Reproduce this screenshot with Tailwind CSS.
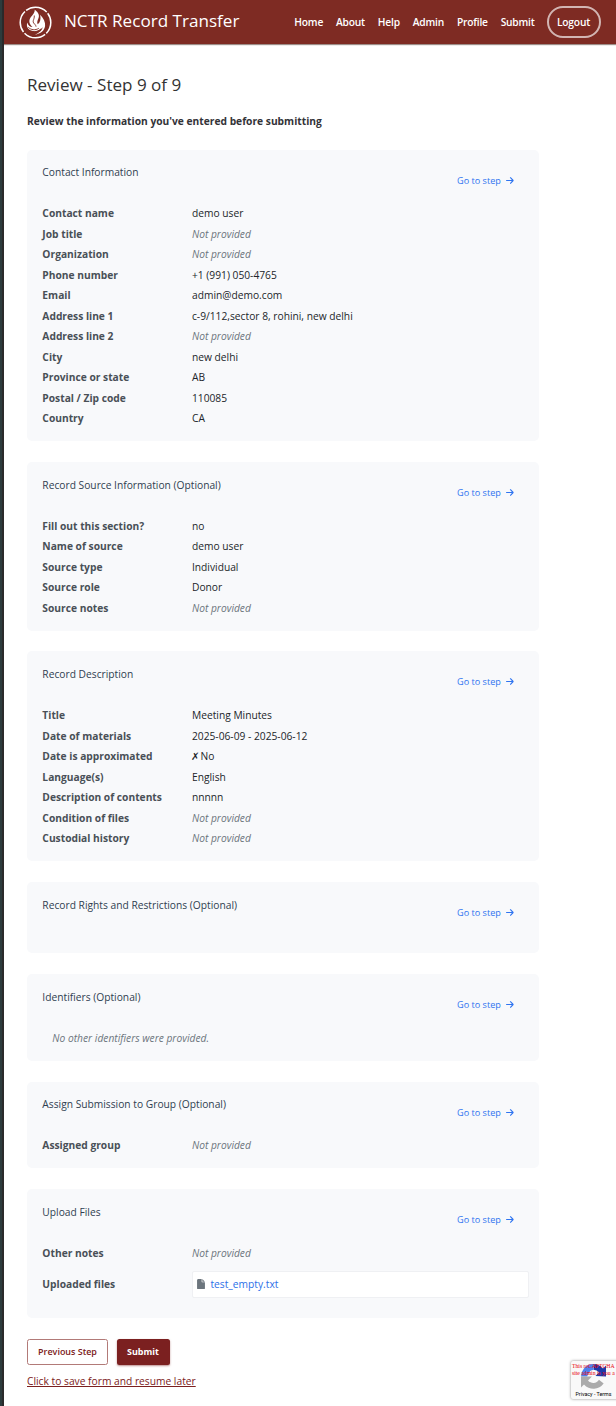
<!DOCTYPE html>
<html lang="en">
<head>
<meta charset="utf-8">
<title>NCTR Record Transfer</title>
<script src="https://cdn.jsdelivr.net/npm/@tailwindcss/browser@4"></script>
</head>
<body class="bg-white font-['Open_Sans','DejaVu_Sans',sans-serif] text-[10.24px] text-[#212529] overflow-hidden">
<svg class="hidden">
  <symbol id="arrow" viewBox="0 0 448 512"><path fill="currentColor" d="M438.600 278.600c12.500-12.500 12.500-32.800 0-45.300l-160-160c-12.500-12.500-32.800-12.500-45.300 0s-12.500 32.800 0 45.300L338.800 224 32 224c-17.700 0-32 14.300-32 32s14.300 32 32 32l306.700 0L233.400 393.400c-12.500 12.500-12.500 32.800 0 45.300s32.800 12.500 45.300 0l160-160z"/></symbol>
</svg>
<div class="flex h-[1406px] relative overflow-hidden">
 <div class="w-[4px] shrink-0 bg-[#2a2a2b] border-l-2 border-[#2c3b3c]"></div>
 <div class="grow">
  <header class="h-[44px] bg-[#7e2b23] text-white flex items-center pl-[15px] pr-[15.500px] shadow-[0_1px_1px_rgba(60,30,20,0.5)]">
    <svg class="size-[33px] shrink-0" viewBox="0 0 33 33" fill="none">
      <circle cx="16.500" cy="16.500" r="15.300" stroke="#fff" stroke-width="1.500" stroke-dasharray="22.500 1.530" stroke-dashoffset="10.500"/>
      <path fill="#fff" d="M15.800 3.800c4.200 3 4.900 6 3.400 9.300-.8 1.800-1.400 3.500-.5 5.200 2.500-1.700 3.300-5 2.500-9.500 3.300 3.500 5.400 7.400 4.900 11.300-.5 4.500-4.400 7.600-10.200 8.900 4.300-2.300 7.300-4.500 7.700-7.700-2.700 3.700-6 4.400-9.600 3.700-4.900-1-7-4.600-5.700-8.600.6 2.700 2.500 4.400 5.200 4.500-3.700-3.200-4-6.300-1.600-9.900 2.200-2.400 3.900-4.100 3.900-7.200z"/>
      <path d="M15.300 9.500c.3 4.500-2.800 5.500.2 8.500 1 1 1.500 1.800 1.500 2.700M9.300 21.300c2.600 2.700 7 3.300 10.500 1M13 25.500c3.500.6 6.500-.5 9-2.500" stroke="#7e2b23" stroke-width=".9"/>
    </svg>
    <div class="ml-[12px] text-[17.100px] font-medium leading-none whitespace-nowrap pb-[2px]">NCTR Record Transfer</div>
    <nav class="ml-auto flex items-center gap-[12.900px] font-semibold tracking-[-0.200px] text-[10.24px] whitespace-nowrap">
      <a class="pt-px">Home</a><a class="pt-px">About</a><a class="pt-px">Help</a><a class="pt-px">Admin</a><a class="pt-px">Profile</a><a class="pt-px">Submit</a>
      <a class="h-[32px] w-[54px] -ml-px rounded-[16px] border-2 border-white/65 flex items-center justify-center pt-px">Logout</a>
    </nav>
  </header>
  <main class="pl-[23px] w-[535px]">
    <h1 class="mt-[29px] h-[23px] leading-[23px] text-[17.060px] text-[#333]">Review - Step 9 of 9</h1>
    <p class="mt-[18px] h-[15px] leading-[15px] font-bold text-[#333338]">Review the information you've entered before submitting</p>

    <div class="mt-[20.800px] flex flex-col gap-[20.900px]">
      <section class="h-[291.200px] rounded-[5px] bg-[#f8f9fb] px-[15.360px] pt-[15.360px]">
        <div class="h-[38.200px] flex justify-between leading-[15px]"><h2 class="text-[#2f3e50]">Contact Information</h2><a class="mt-[7.600px] mr-[10px] flex items-center h-[15px] gap-[5px] text-[9.100px] text-[#2f74f0]">Go to step <svg class="w-[7.800px] h-[9px]"><use href="#arrow"/></svg></a></div>
        <dl class="grid grid-cols-[149.600px_1fr] auto-rows-[20.480px] leading-[20.480px] [&>dt]:font-bold [&>dt]:text-[#495057]">
          <dt>Contact name</dt><dd>demo user</dd>
          <dt>Job title</dt><dd class="italic text-[#6c757d]">Not provided</dd>
          <dt>Organization</dt><dd class="italic text-[#6c757d]">Not provided</dd>
          <dt>Phone number</dt><dd>+1 (991) 050-4765</dd>
          <dt>Email</dt><dd>admin@demo.com</dd>
          <dt>Address line 1</dt><dd>c-9/112,sector 8, rohini, new delhi</dd>
          <dt>Address line 2</dt><dd class="italic text-[#6c757d]">Not provided</dd>
          <dt>City</dt><dd>new delhi</dd>
          <dt>Province or state</dt><dd>AB</dd>
          <dt>Postal / Zip code</dt><dd>110085</dd>
          <dt>Country</dt><dd>CA</dd>
        </dl>
      </section>

      <section class="h-[168.700px] rounded-[5px] bg-[#f8f9fb] px-[15.360px] pt-[15.360px]">
        <div class="h-[38.650px] flex justify-between leading-[15px]"><h2 class="pt-[0.400px] text-[#2f3e50]">Record Source Information (Optional)</h2><a class="mt-[7.600px] mr-[10px] flex items-center h-[15px] gap-[5px] text-[9.100px] text-[#2f74f0]">Go to step <svg class="w-[7.800px] h-[9px]"><use href="#arrow"/></svg></a></div>
        <dl class="grid grid-cols-[149.600px_1fr] auto-rows-[20.480px] leading-[20.480px] [&>dt]:font-bold [&>dt]:text-[#495057]">
          <dt>Fill out this section?</dt><dd>no</dd>
          <dt>Name of source</dt><dd>demo user</dd>
          <dt>Source type</dt><dd>Individual</dd>
          <dt>Source role</dt><dd>Donor</dd>
          <dt>Source notes</dt><dd class="italic text-[#6c757d]">Not provided</dd>
        </dl>
      </section>

      <section class="h-[209.500px] rounded-[5px] bg-[#f8f9fb] px-[15.360px] pt-[15.360px]">
        <div class="h-[38.450px] flex justify-between leading-[15px]"><h2 class="pt-[0.400px] text-[#2f3e50]">Record Description</h2><a class="mt-[7.600px] mr-[10px] flex items-center h-[15px] gap-[5px] text-[9.100px] text-[#2f74f0]">Go to step <svg class="w-[7.800px] h-[9px]"><use href="#arrow"/></svg></a></div>
        <dl class="grid grid-cols-[149.600px_1fr] auto-rows-[20.480px] leading-[20.480px] [&>dt]:font-bold [&>dt]:text-[#495057]">
          <dt>Title</dt><dd>Meeting Minutes</dd>
          <dt>Date of materials</dt><dd>2025-06-09 - 2025-06-12</dd>
          <dt>Date is approximated</dt><dd><span class="-ml-px tracking-[-1.600px]">✗</span> No</dd>
          <dt>Language(s)</dt><dd>English</dd>
          <dt>Description of contents</dt><dd>nnnnn</dd>
          <dt>Condition of files</dt><dd class="italic text-[#6c757d]">Not provided</dd>
          <dt>Custodial history</dt><dd class="italic text-[#6c757d]">Not provided</dd>
        </dl>
      </section>

      <section class="h-[71.400px] rounded-[5px] bg-[#f8f9fb] px-[15.360px] pt-[15.360px]">
        <div class="h-[38.200px] flex justify-between leading-[15px]"><h2 class="pt-[0.400px] text-[#2f3e50]">Record Rights and Restrictions (Optional)</h2><a class="mt-[7.600px] mr-[10px] flex items-center h-[15px] gap-[5px] text-[9.100px] text-[#2f74f0]">Go to step <svg class="w-[7.800px] h-[9px]"><use href="#arrow"/></svg></a></div>
      </section>

      <section class="h-[86.700px] rounded-[5px] bg-[#f8f9fb] px-[15.360px] pt-[15.360px]">
        <div class="h-[38.200px] flex justify-between leading-[15px]"><h2 class="pt-[0.400px] text-[#2f3e50]">Identifiers (Optional)</h2><a class="mt-[7.600px] mr-[10px] flex items-center h-[15px] gap-[5px] text-[9.100px] text-[#2f74f0]">Go to step <svg class="w-[7.800px] h-[9px]"><use href="#arrow"/></svg></a></div>
        <p class="pl-[10px] leading-[20.480px] italic text-[#6c757d]">No other identifiers were provided.</p>
      </section>

      <section class="h-[86.700px] rounded-[5px] bg-[#f8f9fb] px-[15.360px] pt-[15.360px]">
        <div class="h-[38px] flex justify-between leading-[15px]"><h2 class="pt-[0.400px] text-[#2f3e50]">Assign Submission to Group (Optional)</h2><a class="mt-[7.600px] mr-[10px] flex items-center h-[15px] gap-[5px] text-[9.100px] text-[#2f74f0]">Go to step <svg class="w-[7.800px] h-[9px]"><use href="#arrow"/></svg></a></div>
        <dl class="grid grid-cols-[149.600px_1fr] leading-[20.480px] [&>dt]:font-bold [&>dt]:text-[#495057]">
          <dt>Assigned group</dt><dd class="italic text-[#6c757d]">Not provided</dd>
        </dl>
      </section>

      <section class="h-[129px] rounded-[5px] bg-[#f8f9fb] pl-[15.360px] pr-[10px] pt-[15.360px]">
        <div class="h-[38px] flex justify-between leading-[15px]"><h2 class="pt-[0.400px] text-[#2f3e50]">Upload Files</h2><a class="mt-[7.400px] mr-[15.360px] flex items-center h-[15px] gap-[5px] text-[9.100px] text-[#2f74f0]">Go to step <svg class="w-[7.800px] h-[9px]"><use href="#arrow"/></svg></a></div>
        <dl class="grid grid-cols-[149.600px_1fr] leading-[20.480px] [&>dt]:font-bold [&>dt]:text-[#495057]">
          <dt>Other notes</dt><dd class="italic text-[#6c757d]">Not provided</dd>
          <dt class="mt-[10.500px]">Uploaded files</dt>
          <dd class="mt-[7.500px] h-[27px] bg-white border border-[#eff0f3] rounded-[2px] flex items-center pl-[4.500px] gap-[5px] text-[#2b70e8]"><svg class="w-[8px] h-[10.500px]" viewBox="0 0 384 512" fill="#6c757d"><path d="M0 64C0 28.700 28.700 0 64 0L224 0l0 128c0 17.700 14.300 32 32 32l128 0 0 288c0 35.300-28.700 64-64 64L64 512c-35.300 0-64-28.700-64-64L0 64zm384 64l-128 0L256 0 384 128z"/></svg>test_empty.txt</dd>
        </dl>
      </section>
    </div>

    <div class="mt-[20.400px] flex gap-[8.500px] text-[8.960px] font-bold">
      <button class="w-[81px] h-[26px] border border-[#b27a78] rounded-[2.500px] text-[#7b2020] font-semibold">Previous Step</button>
      <button class="w-[53px] h-[26px] bg-[#7b2020] text-white rounded-[2.500px] shadow-[0_1px_2px_rgba(123,32,32,0.5)]">Submit</button>
    </div>
    <a class="block mt-[9.400px] leading-[15px] underline text-[#7b2020]">Click to save form and resume later</a>
  </main>
 </div>

  <aside class="absolute left-[571px] top-[1361px] w-[60px] h-[38px] bg-[#f9f9f9] rounded-[2px] shadow-[0_0_3px_#888]">
    <svg class="absolute left-[10px] top-[3px] size-[25px]" viewBox="0 0 64 64">
      <path fill="#1c3aa9" d="M64 32V4l-7.700 7.700A32 32 0 0 0 32 0v15a17 17 0 0 1 14 7l-9 9z"/>
      <path fill="#4c82ee" d="M32 0H28A32 32 0 0 0 7 12L19 24a17 17 0 0 1 13-9zM7 12A32 32 0 0 0 0 32h16a17 17 0 0 1 4-9z"/>
      <path fill="#ababab" d="M0 32v28l7.700-7.700A32 32 0 0 0 58 50L46 40a17 17 0 0 1-28 2l10-10z"/>
    </svg>
    <p class="absolute left-[1px] top-[2px] font-['Liberation_Serif',serif] text-[5.700px] leading-[7px] text-red-600 whitespace-nowrap">This reCAPTCHA<br>site admin is you a</p>
    <p class="absolute left-[4.500px] top-[29px] font-['Roboto',sans-serif] text-[5.300px] leading-[8px] text-black whitespace-nowrap">Privacy - Terms</p>
  </aside>
</div>
</body>
</html>
